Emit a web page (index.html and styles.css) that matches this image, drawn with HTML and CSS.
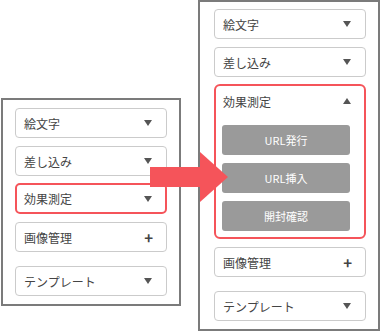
FILE: index.html
```html
<!DOCTYPE html>
<html lang="ja">
<head>
    <meta charset="UTF-8">
    <meta name="viewport" content="width=device-width, initial-scale=1.0">
    <title>効果測定メニュー</title>
    <link rel="stylesheet" href="styles.css">
</head>
<body>

<div class="stage">
    <!-- 閉じた状態 -->
    <div class="panel panel-before">
        <div class="menu-item">絵文字<span class="caret down"></span></div>
        <div class="menu-item">差し込み<span class="caret down"></span></div>
        <div class="menu-item active">効果測定<span class="caret down"></span></div>
        <div class="menu-item">画像管理<span class="plus">+</span></div>
        <div class="menu-item template">テンプレート<span class="caret down"></span></div>
    </div>

    <!-- 開いた状態 -->
    <div class="panel panel-after">
        <div class="menu-item">絵文字<span class="caret down"></span></div>
        <div class="menu-item">差し込み<span class="caret down"></span></div>
        <div class="menu-group active">
            <div class="menu-head">効果測定<span class="caret up"></span></div>
            <div class="sub-list">
                <button class="sub-btn">URL発行</button>
                <button class="sub-btn">URL挿入</button>
                <button class="sub-btn">開封確認</button>
            </div>
        </div>
        <div class="menu-item">画像管理<span class="plus">+</span></div>
        <div class="menu-item template">テンプレート<span class="caret down"></span></div>
    </div>

    <svg class="pointer" width="80" height="56" viewBox="0 0 80 56">
        <rect x="0" y="17" width="51" height="20" fill="#f5545a"/>
        <polygon points="50,2 50,52 78,27" fill="#f5545a"/>
    </svg>
</div>

</body>
</html>
```

FILE: styles.css
```css
body { margin: 0; background: #ffffff; font-family: "Noto Sans CJK JP", "Noto Sans", sans-serif; }
.stage { position: relative; display: flex; align-items: flex-start; width: 380px; height: 331px; overflow: hidden; }

.panel { display: flex; flex-direction: column; gap: 8px; border: 2px solid #7b7b7b; box-sizing: border-box; background: #ffffff; }
.panel-before { width: 180px; margin: 98px 0 0 1px; padding: 8px 12px; }
.panel-after { width: 182px; height: 331px; margin-left: 17px; padding: 7px 12px 8px 14px; }

.menu-item { display: flex; align-items: center; justify-content: space-between; height: 30px; box-sizing: border-box; padding: 0 14px 0 8px; border: 1px solid #cbcbcb; border-radius: 4px; font-size: 12px; color: #444; }
.menu-item.template { margin-top: 6px; }
.menu-item.active { height: 31px; margin-top: -1px; border: 2px solid #f5545a; border-radius: 5px; padding: 0 13px 0 7px; }

.menu-group.active { margin-top: -1px; border: 2px solid #f5545a; border-radius: 6px; padding-bottom: 6px; }
.menu-head { display: flex; align-items: center; justify-content: space-between; height: 30px; padding: 0 13px 0 7px; font-size: 12px; color: #444; }

.sub-list { display: flex; flex-direction: column; gap: 8px; margin-top: 9px; padding: 0 14px 0 6px; }
.sub-btn { height: 30px; border: none; border-radius: 3px; background: #9a9a9a; color: #ffffff; font-family: "Noto Sans CJK JP", "Noto Sans", sans-serif; font-size: 11px; padding: 0; }

.caret { width: 0; height: 0; border-left: 4px solid transparent; border-right: 4px solid transparent; }
.caret.down { border-top: 6px solid #555; }
.caret.up { border-bottom: 6px solid #555; }
.plus { font-size: 15px; font-weight: bold; color: #444; line-height: 1; margin-right: -1px; }

.pointer { position: absolute; left: 150px; top: 150px; }
```
